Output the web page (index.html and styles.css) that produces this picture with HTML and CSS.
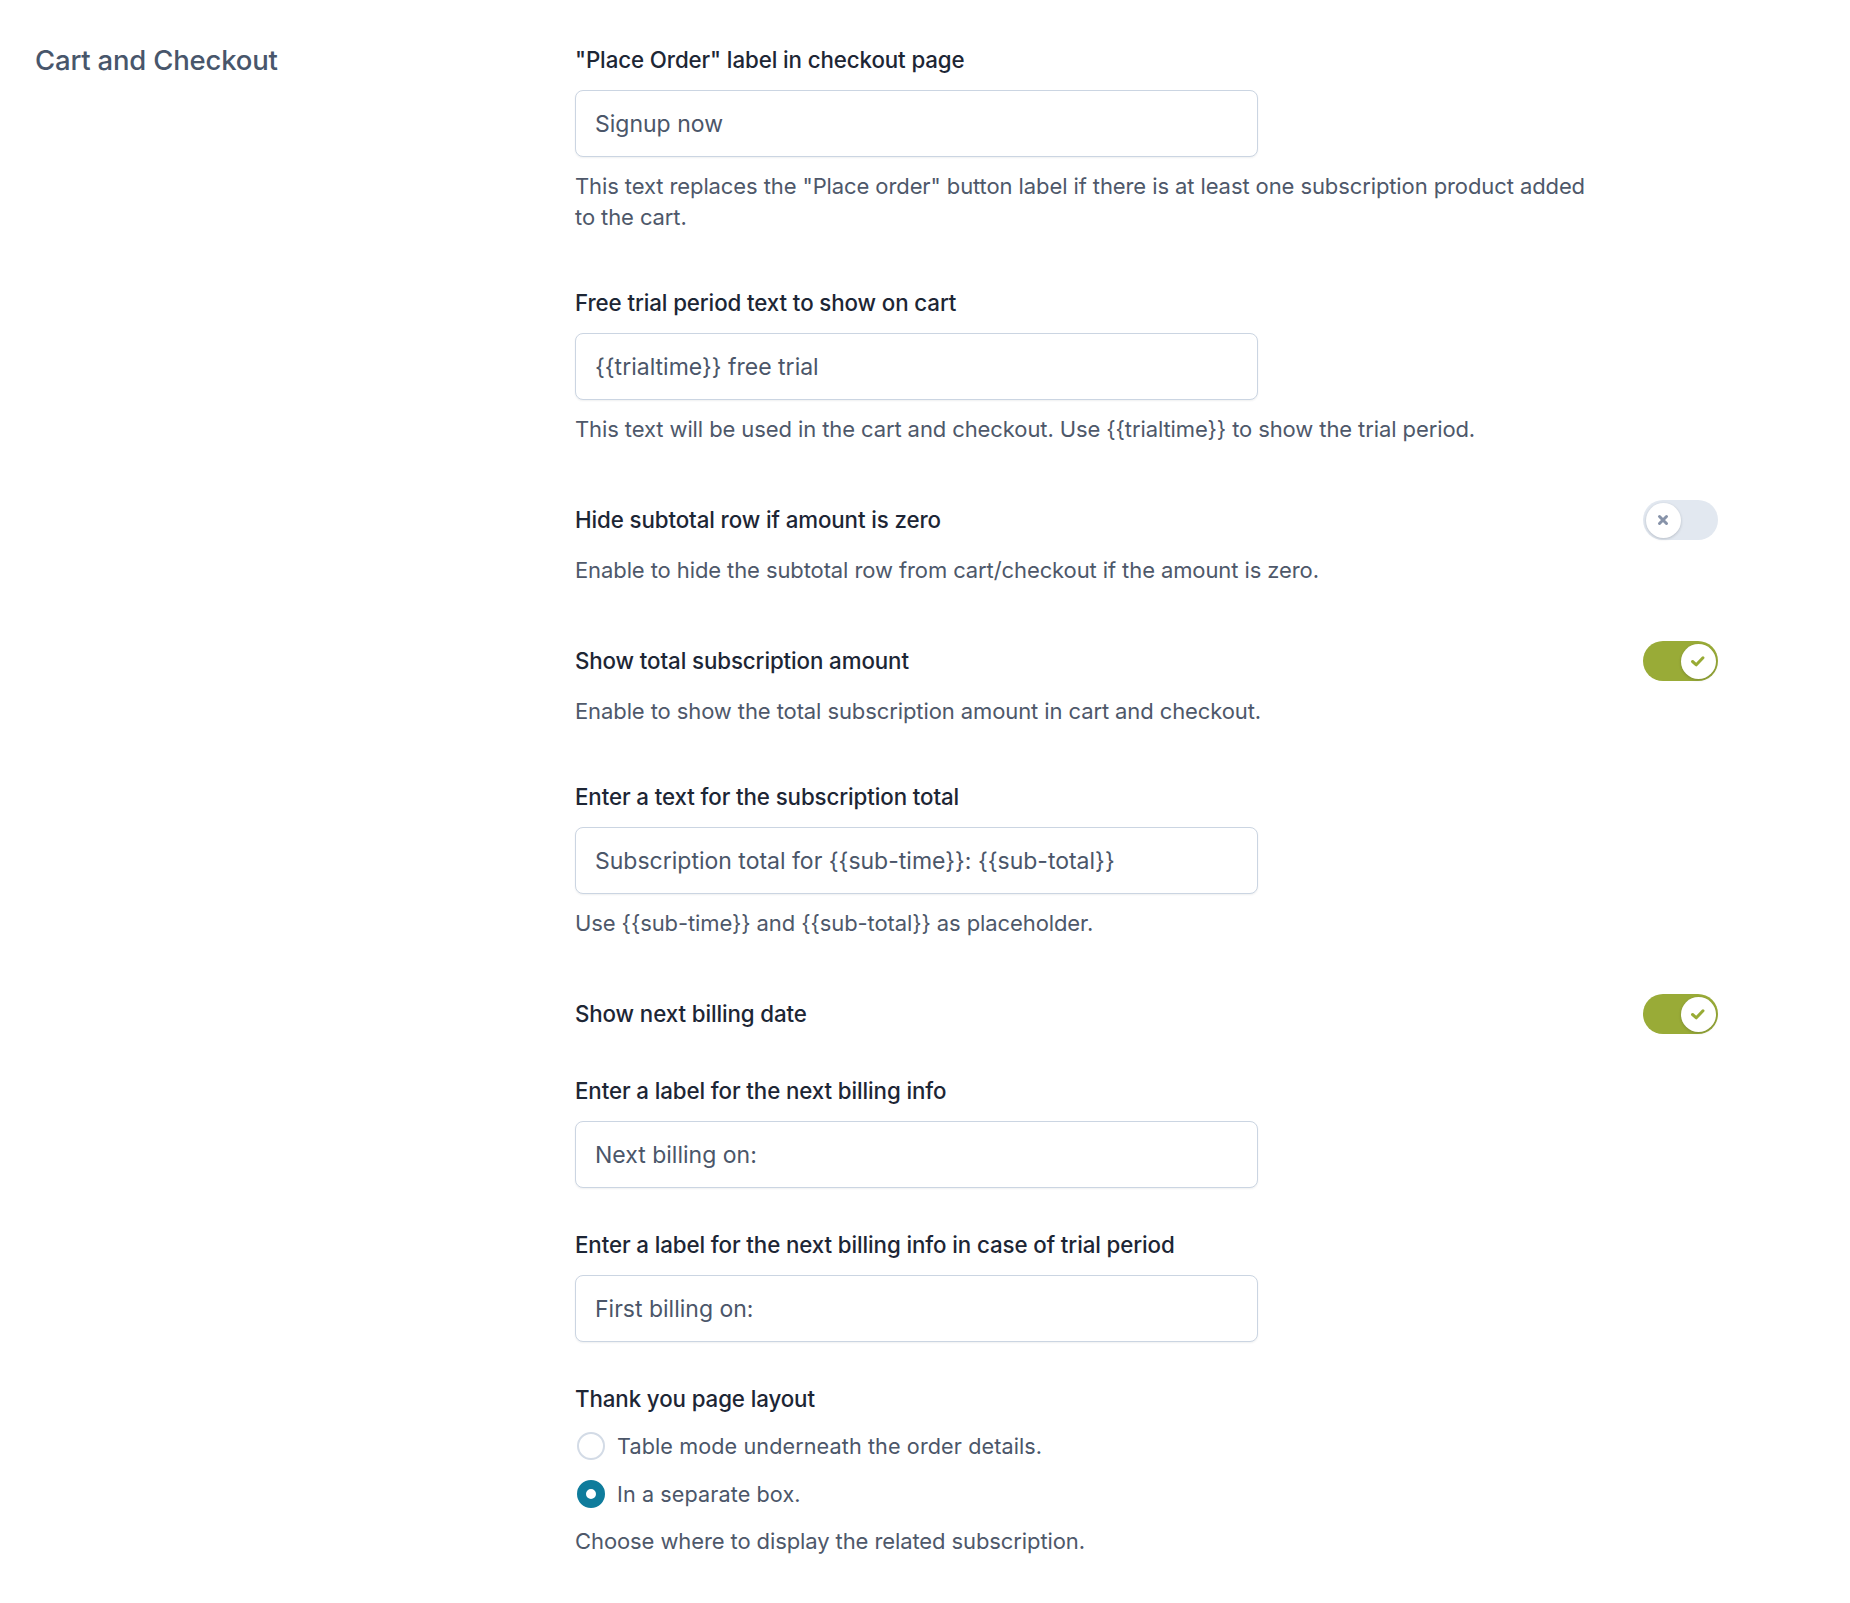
FILE: index.html
```html
<!DOCTYPE html>
<html lang="en">
<head>
<meta charset="utf-8">
<title>Cart and Checkout</title>
<link rel="stylesheet" href="styles.css">
</head>
<body>
<div class="page">
  <div class="side">
    <h2 class="section-title">Cart and Checkout</h2>
  </div>
  <div class="fields">
    <div class="field with-help">
      <label class="field-label">"Place Order" label in checkout page</label>
      <input class="text-input" type="text" value="Signup now">
      <p class="help">This text replaces the "Place order" button label if there is at least one subscription product added to the cart.</p>
    </div>

    <div class="field with-help">
      <label class="field-label">Free trial period text to show on cart</label>
      <input class="text-input" type="text" value="{{trialtime}} free trial">
      <p class="help">This text will be used in the cart and checkout. Use {{trialtime}} to show the trial period.</p>
    </div>

    <div class="field with-help">
      <div class="toggle-row">
        <span class="field-label">Hide subtotal row if amount is zero</span>
        <span class="toggle">
          <span class="knob">
            <svg width="16" height="16" viewBox="0 0 16 16"><path d="M4.5 4.5 L11.5 11.5 M11.5 4.5 L4.5 11.5" stroke="#8793a9" stroke-width="3" stroke-linecap="round" fill="none"/></svg>
          </span>
        </span>
      </div>
      <p class="help help-toggle">Enable to hide the subtotal row from cart/checkout if the amount is zero.</p>
    </div>

    <div class="field with-help">
      <div class="toggle-row">
        <span class="field-label">Show total subscription amount</span>
        <span class="toggle on">
          <span class="knob">
            <svg width="18" height="16" viewBox="0 0 18 16"><path d="M3.5 8.5 L7.3 11.8 L14 4.8" stroke="#98ab35" stroke-width="3" stroke-linecap="round" stroke-linejoin="round" fill="none"/></svg>
          </span>
        </span>
      </div>
      <p class="help help-toggle">Enable to show the total subscription amount in cart and checkout.</p>
    </div>

    <div class="field with-help">
      <label class="field-label">Enter a text for the subscription total</label>
      <input class="text-input" type="text" value="Subscription total for {{sub-time}}: {{sub-total}}">
      <p class="help">Use {{sub-time}} and {{sub-total}} as placeholder.</p>
    </div>

    <div class="field">
      <div class="toggle-row">
        <span class="field-label">Show next billing date</span>
        <span class="toggle on">
          <span class="knob">
            <svg width="18" height="16" viewBox="0 0 18 16"><path d="M3.5 8.5 L7.3 11.8 L14 4.8" stroke="#98ab35" stroke-width="3" stroke-linecap="round" stroke-linejoin="round" fill="none"/></svg>
          </span>
        </span>
      </div>
    </div>

    <div class="field">
      <label class="field-label">Enter a label for the next billing info</label>
      <input class="text-input" type="text" value="Next billing on:">
    </div>

    <div class="field">
      <label class="field-label">Enter a label for the next billing info in case of trial period</label>
      <input class="text-input" type="text" value="First billing on:">
    </div>

    <div class="field">
      <span class="field-label">Thank you page layout</span>
      <div class="radios">
        <label class="radio-row"><span class="radio"></span><span class="radio-text">Table mode underneath the order details.</span></label>
        <label class="radio-row"><span class="radio checked"></span><span class="radio-text">In a separate box.</span></label>
      </div>
      <p class="help help-radio">Choose where to display the related subscription.</p>
    </div>
  </div>
</div>
</body>
</html>
```

FILE: styles.css
```css
* { box-sizing: border-box; }

html, body {
  margin: 0;
  padding: 0;
  background: #ffffff;
}

body {
  font-family: Inter, "Noto Sans", "Liberation Sans", sans-serif;
  -webkit-font-smoothing: antialiased;
}

.page {
  display: flex;
  align-items: flex-start;
  padding: 45px 0 40px 35px;
}

.side {
  width: 540px;
  flex: none;
}

.section-title {
  margin: 0;
  font-size: 27.5px;
  line-height: 30px;
  font-weight: 500;
  color: #48566b;
  letter-spacing: -0.2px;
}

.fields {
  width: 1143px;
  display: flex;
  flex-direction: column;
}

.field {
  display: flex;
  flex-direction: column;
  margin-bottom: 42px;
}

.field.with-help {
  margin-bottom: 55px;
}

.field-label {
  display: block;
  font-size: 22.3px;
  line-height: 30px;
  font-weight: 500;
  color: #1d2635;
  letter-spacing: -0.1px;
}

.text-input {
  margin-top: 15px;
  width: 683px;
  height: 67px;
  padding: 0 19px;
  border: 1.5px solid #cbd5e2;
  border-radius: 8px;
  font-family: inherit;
  font-size: 23px;
  color: #4b5669;
  background: #ffffff;
  box-shadow: 0 1px 2px rgba(30, 41, 59, 0.07);
  outline: none;
}

.help {
  margin: 14px 0 0 0;
  max-width: 1030px;
  font-size: 22px;
  line-height: 31px;
  color: #4e586a;
  letter-spacing: -0.1px;
}

.help-toggle {
  margin-top: 15px;
}

.help-radio {
  margin-top: 16px;
}

.toggle-row {
  display: flex;
  align-items: center;
  justify-content: space-between;
  height: 40px;
}

.toggle {
  position: relative;
  width: 75px;
  height: 40px;
  border-radius: 20px;
  background: #e2e8f0;
  flex: none;
}

.toggle.on {
  background: #99ab37;
}

.knob {
  position: absolute;
  top: 2.5px;
  left: 2.5px;
  width: 35px;
  height: 35px;
  border-radius: 50%;
  background: #ffffff;
  box-shadow: 0 1px 3px rgba(15, 23, 42, 0.2);
  display: flex;
  align-items: center;
  justify-content: center;
}

.toggle.on .knob {
  left: auto;
  right: 2.5px;
}

.radios {
  margin-top: 16px;
  display: flex;
  flex-direction: column;
  gap: 16px;
}

.radio-row {
  display: flex;
  align-items: center;
  height: 32px;
  gap: 12px;
  padding-left: 2px;
}

.radio {
  width: 28px;
  height: 28px;
  border-radius: 50%;
  border: 2px solid #d3dbe6;
  background: #ffffff;
  flex: none;
}

.radio.checked {
  border: 9px solid #0f7c9c;
}

.radio-text {
  font-size: 21.6px;
  line-height: 32px;
  color: #4b5669;
  letter-spacing: 0.1px;
}
```
